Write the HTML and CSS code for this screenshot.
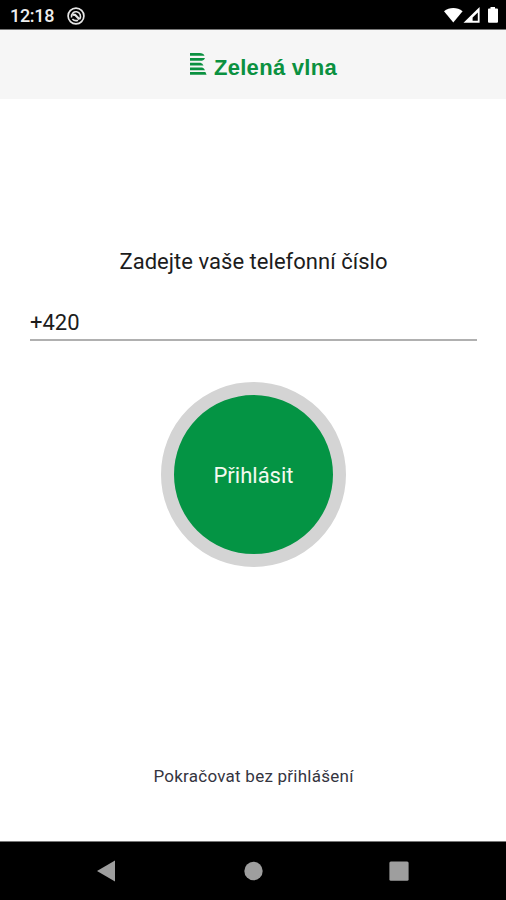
FILE: index.html
```
<!DOCTYPE html>
<html lang="cs">
<head>
  <meta charset="UTF-8">
  <meta name="viewport" content="width=device-width, initial-scale=1.0">
  <title>Zelená vlna</title>
  <link rel="stylesheet" href="styles.css">
</head>
<body>
  <div class="status-bar">
    <span class="time">12:18</span>
    <svg class="app-icon" width="18" height="18" viewBox="0 0 18 18" fill="none" stroke="#e6e6e6">
      <circle cx="9" cy="9" r="7.9" stroke-width="1.7"/>
      <path d="M4.6 10.5C3.8 6.4 7 4.4 9.6 4.8C13.2 5.4 14.4 9 12.8 12.2M5.4 12C7 13.8 9 14 11 13.2" stroke-width="1.6"/>
      <path d="M5.4 7.6L8 7.8L12.6 12.4" stroke-width="2.2"/>
    </svg>
    <svg class="system-icons" width="56" height="18" viewBox="0 0 56 18" fill="#fff">
      <path d="M0 4.3C5.4-.1 13.2-.1 18.6 4.3L9.3 15.6Z"/>
      <path fill-rule="evenodd" d="M19.5 15.7L35.6 0V15.7ZM33.8 5.6L28.6 10.6V13.8H33.8Z"/>
      <path d="M46.5 1.6V0H51V1.6H53Q54 1.6 54 2.6V14.7Q54 15.7 53 15.7H45Q44 15.7 44 14.7V2.6Q44 1.6 45 1.6Z"/>
    </svg>
  </div>

  <header class="header">
    <svg class="logo" width="18" height="23" viewBox="0 0 18 23" fill="#0b9140">
      <path d="M1 0H10.5Q14.5 0 15.5 2.8H1Z"/>
      <path d="M1 5H16Q15.5 7.2 13 7.8H1Z"/>
      <path d="M1 9.8H11.5Q13.7 10.6 14.5 12.6H1Z"/>
      <path d="M1 14.4H13.2Q15.2 15.2 16 17.2H1Z"/>
      <path d="M1 19H16.4L17.6 21.8H1Z"/>
    </svg>
    <h1>Zelená vlna</h1>
  </header>

  <main class="login">
    <label class="prompt" for="phone">Zadejte vaše telefonní číslo</label>
    <input class="phone" id="phone" type="tel" value="+420">
    <button class="btn" type="button">Přihlásit</button>
    <a href="#" class="skip">Pokračovat bez přihlášení</a>
  </main>

  <nav class="nav-bar">
    <svg width="20" height="22" viewBox="0 0 20 22" fill="#9e9e9e">
      <path d="M0 11L18 .5V21.5Z"/>
    </svg>
    <svg width="20" height="22" viewBox="0 0 20 22" fill="#9e9e9e">
      <circle cx="10.5" cy="11" r="9.2"/>
    </svg>
    <svg width="20" height="22" viewBox="0 0 20 22" fill="#9e9e9e">
      <rect x=".4" y="1.6" width="19.2" height="19.2" rx="1.5"/>
    </svg>
  </nav>
</body>
</html>
```
FILE: styles.css
```
* {
  box-sizing: border-box;
}
body {
  margin: 0;
  height: 900px;
  display: flex;
  flex-direction: column;
  overflow: hidden;
  font-family: Roboto, sans-serif;
  background-color: #fff;
  color: #1c1c1c;
}
.status-bar {
  flex: none;
  display: flex;
  align-items: center;
  height: 30px;
  padding: 2px 6px 0 10px;
  background-color: #000;
  border-bottom: 1px solid #777;
  color: #eee;
}
.time {
  width: 57px;
  font-size: 18px;
  font-weight: 500;
  letter-spacing: -0.3px;
}
.system-icons {
  margin-left: auto;
}
.header {
  flex: none;
  display: flex;
  justify-content: center;
  height: 69px;
  padding-top: 23px;
  padding-left: 20px;
  background-color: #f6f6f6;
}
.logo {
  margin-right: 7px;
}
h1 {
  margin: 2px 0 0;
  font-family: "Liberation Sans", Arial, sans-serif;
  font-size: 22px;
  line-height: 26px;
  letter-spacing: 0.3px;
  color: #0b9140;
}
.login {
  flex: 1;
  display: flex;
  flex-direction: column;
  align-items: center;
  padding: 148px 29px 0 30px;
}
.prompt {
  font-size: 22px;
  line-height: 30px;
  letter-spacing: 0.03px;
}
.phone {
  width: 100%;
  height: 35px;
  margin-top: 29px;
  padding: 0;
  border: 0;
  border-bottom: 2px solid #b0b0b0;
  outline: none;
  background: none;
  font-family: inherit;
  font-size: 22px;
  color: #1c1c1c;
}
.btn {
  width: 185px;
  height: 185px;
  margin-top: 41px;
  padding: 2px 0 0;
  border: 13px solid #d4d4d4;
  border-radius: 50%;
  background-color: #049444;
  font-family: inherit;
  font-size: 22px;
  color: #f4faef;
}
.skip {
  margin-top: 199px;
  font-size: 17px;
  line-height: 20px;
  letter-spacing: 0.25px;
  color: #35353f;
  text-decoration: none;
}
.nav-bar {
  flex: none;
  display: flex;
  justify-content: space-between;
  align-items: center;
  height: 59px;
  padding: 0 97px;
  border-top: 1px solid #777;
  background-color: #000;
}
```
